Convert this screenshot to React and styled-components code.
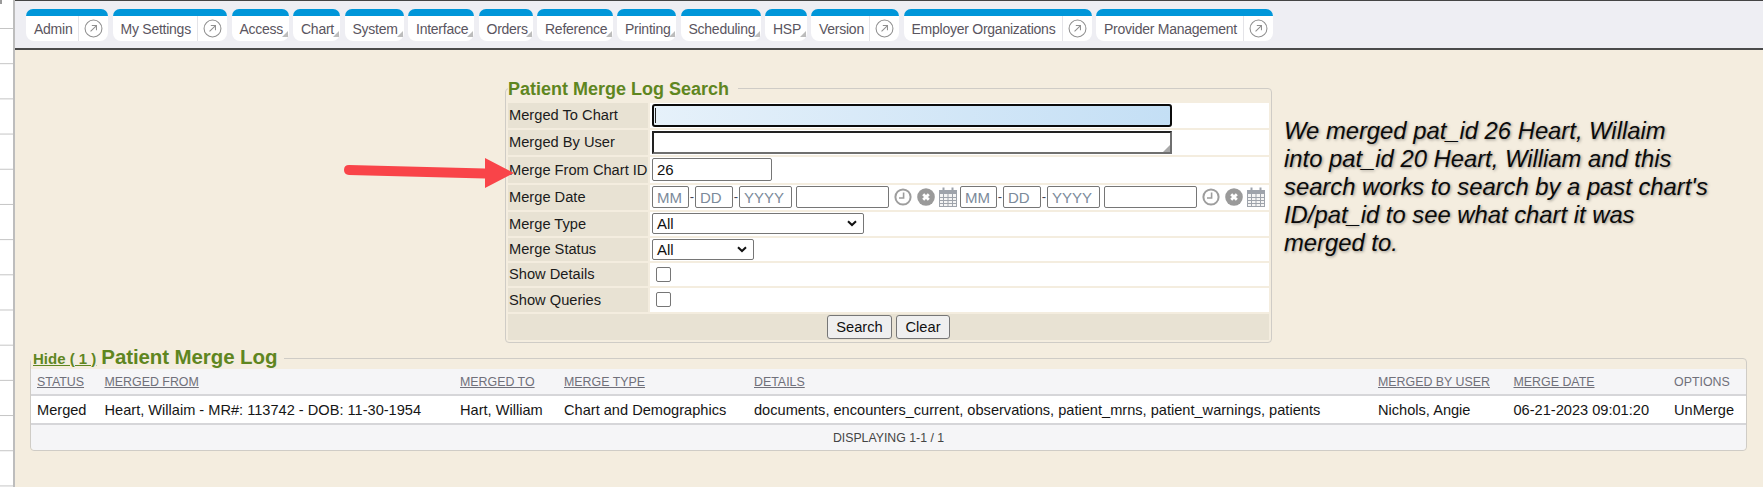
import React from 'react';
import styled, { createGlobalStyle } from 'styled-components';

const GlobalStyle = createGlobalStyle`
  html, body { margin: 0; padding: 0; height: 100%; overflow: hidden; }
  body { background: #f4eddf; font-family: "Liberation Sans", Arial, sans-serif; color: #111; }
  #root { height: 100%; }
`;

const Page = styled.div`
  display: flex;
  height: 487px;
  position: relative;
`;

const SideStrip = styled.div`
  position: relative;
  width: 13px;
  flex: none;
  background-color: #fff;
  background-image: linear-gradient(#c4c4c4 1px, transparent 1px);
  background-size: 100% 35.2px;
  background-position: 0 28px;
  border-right: 2px solid #bdbdbd;
  &::before {
    content: '';
    position: absolute;
    top: 0;
    left: 0;
    width: 2px;
    height: 4px;
    background: #9a9a9a;
  }
`;

const Main = styled.div`
  flex: 1;
  min-width: 0;
  display: flex;
  flex-direction: column;
`;

const Toolbar = styled.div`
  height: 39px;
  padding-top: 8px;
  padding-left: 11px;
  display: flex;
  gap: 4.5px;
  background: #eeeef3;
  border-top: 1px solid #444;
  border-bottom: 2px solid #4a4a4a;
`;

const Tab = styled.div`
  position: relative;
  width: ${(p) => p.$w}px;
  height: 32px;
  box-sizing: border-box;
  display: flex;
  align-items: center;
  flex: none;
  background: #fff;
  border-top: 7px solid #0096d9;
  border-radius: 7px 7px 8px 8px;
  font-size: 14px;
  color: #5a5560;
  white-space: nowrap;
  letter-spacing: -0.25px;
`;

const TabLabel = styled.span`
  flex: 1;
  padding-left: 8px;
`;

const TabLink = styled.span`
  width: 29px;
  height: 100%;
  flex: none;
  display: flex;
  align-items: center;
  justify-content: center;
  border-left: 1px solid #e4e4e8;
`;

const MenuCorner = styled.i`
  position: absolute;
  right: 1px;
  bottom: 4px;
  width: 0;
  height: 0;
  border-style: solid;
  border-width: 0 0 6px 6px;
  border-color: transparent transparent #bcbcbc transparent;
`;

const Content = styled.div`
  padding: 29.5px 0 0 15px;
`;

const SearchRow = styled.div`
  display: flex;
  align-items: flex-start;
  padding-left: 475px;
`;

const Panel = styled.fieldset`
  margin: 0;
  padding: 0 2px 2px;
  box-sizing: border-box;
  min-width: 0;
  border: 1px solid #cfccc6;
  border-radius: 4px;
  width: ${(p) => p.$w}px;
  flex: none;
`;

const PanelLegend = styled.legend`
  padding: 0 9px 0 0;
  margin-left: 0;
  font-size: 18px;
  font-weight: bold;
  line-height: 18px;
  color: #5f861f;
  white-space: nowrap;
`;

const FormGrid = styled.div`
  display: grid;
  grid-template-columns: 140px 1fr;
  column-gap: 2px;
  margin-top: 5px;
`;

const Label = styled.div`
  height: ${(p) => p.$h}px;
  margin-bottom: 2px;
  padding-left: 1px;
  display: flex;
  align-items: center;
  background: #e8e2d3;
  font-size: 14.67px;
  color: #1b1b1b;
  white-space: nowrap;
`;

const Field = styled.div`
  height: ${(p) => p.$h}px;
  margin-bottom: 2px;
  padding-left: 2px;
  display: flex;
  align-items: center;
  background: #fff;
`;

const ActionBar = styled.div`
  grid-column: 1 / -1;
  height: 26px;
  display: flex;
  justify-content: center;
  align-items: center;
  gap: 4px;
  background: #e8e2d3;
`;

const FocusInput = styled.div`
  width: 520px;
  height: 23px;
  box-sizing: border-box;
  border: 2px solid #0b0b0b;
  border-radius: 3px;
  padding: 2px 1px;
  background: linear-gradient(90deg, #e6f1fa, #c4dff5);
`;

const Caret = styled.div`
  width: 1px;
  height: 15px;
  background: #222;
`;

const Area = styled.div`
  position: relative;
  width: 520px;
  height: 23px;
  box-sizing: border-box;
  background: #fff;
  border: 2px solid;
  border-color: #222 #6f6f6f #6f6f6f #222;
`;

const Grip = styled.i`
  position: absolute;
  right: 0;
  bottom: 0;
  width: 0;
  height: 0;
  border-style: solid;
  border-width: 0 0 7px 7px;
  border-color: transparent transparent #a8a8a8 transparent;
`;

const TextBox = styled.div`
  width: ${(p) => p.$w}px;
  height: ${(p) => p.$h || 22}px;
  flex: none;
  box-sizing: border-box;
  margin-right: ${(p) => p.$mr || 0}px;
  padding-left: 4px;
  border: 1px solid #767676;
  border-radius: 2px;
  background: #fff;
  display: flex;
  align-items: center;
  font-size: 15px;
  color: ${(p) => (p.$hint ? '#7b8a9a' : '#111')};
`;

const Dash = styled.span`
  width: 6px;
  flex: none;
  text-align: center;
  font-size: 13px;
  line-height: 22px;
  color: #445;
`;

const IconBtn = styled.span`
  width: ${(p) => p.$w}px;
  flex: none;
  display: flex;
  justify-content: center;
`;

const SelectBox = styled.div`
  width: ${(p) => p.$w}px;
  height: 21px;
  flex: none;
  box-sizing: border-box;
  padding: 0 6px 0 4px;
  display: flex;
  align-items: center;
  justify-content: space-between;
  border: 1px solid #767676;
  border-radius: 2px;
  font-size: 15px;
  color: #111;
`;

const Check = styled.span`
  width: 13px;
  height: 13px;
  margin-left: 4px;
  border: 1px solid #767676;
  border-radius: 2px;
  background: #fff;
`;

const Button = styled.div`
  height: 24px;
  width: ${(p) => p.$w}px;
  box-sizing: border-box;
  display: flex;
  align-items: center;
  justify-content: center;
  border: 1px solid #767676;
  border-radius: 3px;
  background: #efefef;
  font-size: 14.67px;
  color: #111;
`;

const Note = styled.p`
  width: 440px;
  flex: none;
  margin: 37px 0 0 12px;
  font-size: 23.8px;
  line-height: 28.2px;
  font-style: italic;
  color: #0a0a0a;
  text-shadow: 1px 1px 3px rgba(0, 0, 0, 0.4);
`;

const LogPanel = styled(Panel)`
  margin-top: 5.5px;
  padding: 0;
  overflow: visible;
`;

const LogLegend = styled.legend`
  padding: 0 7px 0 2px;
  margin-left: 0;
  display: flex;
  align-items: baseline;
  gap: 5px;
  line-height: 18px;
  white-space: nowrap;
`;

const HideLink = styled.span`
  font-size: 15px;
  font-weight: bold;
  color: #5f861f;
  text-decoration: underline;
`;

const LogTitle = styled.span`
  font-size: 20.5px;
  font-weight: bold;
  color: #5f861f;
  letter-spacing: -0.1px;
`;

const Table = styled.table`
  width: 100%;
  table-layout: fixed;
  border-collapse: collapse;
  margin-top: 1px;
`;

const HeadCell = styled.th`
  height: 25px;
  padding: 0 0 0 6px;
  text-align: left;
  font-size: 12.4px;
  font-weight: normal;
  color: #70707a;
  background: #f5f5f7;
  border-bottom: 2px solid #d6d6d9;
  text-decoration: ${(p) => (p.$plain ? 'none' : 'underline')};
  white-space: nowrap;
`;

const BodyCell = styled.td`
  height: 27px;
  padding: 0 0 0 6px;
  font-size: 14.6px;
  color: #151515;
  background: #fff;
  border-bottom: 2px solid #d6d6d9;
  white-space: nowrap;
`;

const Pager = styled.div`
  height: 25px;
  display: flex;
  align-items: center;
  justify-content: center;
  background: #f5f5f7;
  font-size: 12.3px;
  color: #444;
  border-radius: 0 0 4px 4px;
`;

const Arrow = styled.svg`
  position: absolute;
  left: 340px;
  top: 154px;
  pointer-events: none;
`;

const LinkIcon = () => (
  <svg width="19" height="19" viewBox="0 0 18 18" fill="none" stroke="#8f8f8f" strokeWidth="1">
    <circle cx="9" cy="9" r="8" />
    <path d="M6.2 11.8 L11.6 6.4 M7.4 6.2 H11.8 V10.6" />
  </svg>
);

const ClockIcon = () => (
  <svg width="18" height="18" viewBox="0 0 18 18" fill="none" stroke="#9d9d9d">
    <circle cx="9" cy="9" r="7.6" strokeWidth="2" />
    <path d="M9.6 4.5 V10 H5" strokeWidth="1.6" />
  </svg>
);

const ClearIcon = () => (
  <svg width="18" height="18" viewBox="0 0 18 18">
    <circle cx="9" cy="9" r="8.8" fill="#9a9a9a" />
    <path d="M6.2 6.2 L11.8 11.8 M11.8 6.2 L6.2 11.8" stroke="#fff" strokeWidth="2.8" />
  </svg>
);

const CalendarIcon = () => (
  <svg width="18" height="20" viewBox="0 0 18 20" fill="none" stroke="#9ea3ab" strokeWidth="1">
    <rect x="0.5" y="3.5" width="17" height="16" fill="#f4f4f4" />
    <rect x="0.5" y="3.5" width="17" height="3" fill="#9ea3ab" />
    <path d="M0.5 10.5 H17.5 M0.5 13.5 H17.5 M0.5 16.5 H17.5 M4.5 6.5 V19.5 M9 6.5 V19.5 M13.5 6.5 V19.5" />
    <path d="M4.5 0.5 V4 M13.5 0.5 V4" strokeWidth="2" />
  </svg>
);

const SmallChevron = () => (
  <svg width="10" height="7" viewBox="0 0 10 7" fill="none" stroke="#111" strokeWidth="2">
    <path d="M1 1.2 L5 5 L9 1.2" />
  </svg>
);

const tabs = [
  { name: 'Admin', w: 82, link: true },
  { name: 'My Settings', w: 114.5, link: true },
  { name: 'Access', w: 57 },
  { name: 'Chart', w: 47 },
  { name: 'System', w: 59 },
  { name: 'Interface', w: 66 },
  { name: 'Orders', w: 54 },
  { name: 'Reference', w: 75.5 },
  { name: 'Printing', w: 59 },
  { name: 'Scheduling', w: 80 },
  { name: 'HSP', w: 41.5 },
  { name: 'Version', w: 88, link: true },
  { name: 'Employer Organizations', w: 188, link: true },
  { name: 'Provider Management', w: 177, link: true },
];

const columns = [
  { title: 'STATUS', w: 67.5 },
  { title: 'MERGED FROM', w: 355.5 },
  { title: 'MERGED TO', w: 104 },
  { title: 'MERGE TYPE', w: 190 },
  { title: 'DETAILS', w: 624 },
  { title: 'MERGED BY USER', w: 135.5 },
  { title: 'MERGE DATE', w: 160.5 },
  { title: 'OPTIONS', plain: true },
];

const row = [
  'Merged',
  'Heart, Willaim - MR#: 113742 - DOB: 11-30-1954',
  'Hart, William',
  'Chart and Demographics',
  'documents, encounters_current, observations, patient_mrns, patient_warnings, patients',
  'Nichols, Angie',
  '06-21-2023 09:01:20',
  'UnMerge',
];

const DateRange = () => (
  <>
    <TextBox $w={37} $hint>MM</TextBox>
    <Dash>-</Dash>
    <TextBox $w={38} $hint>DD</TextBox>
    <Dash>-</Dash>
    <TextBox $w={53} $hint $mr={4}>YYYY</TextBox>
    <TextBox $w={93} />
    <IconBtn $w={28}><ClockIcon /></IconBtn>
    <IconBtn $w={18}><ClearIcon /></IconBtn>
    <IconBtn $w={25}><CalendarIcon /></IconBtn>
  </>
);

const App = () => (
  <Page>
    <GlobalStyle />
    <SideStrip />
    <Main>
      <Toolbar>
        {tabs.map((t) => (
          <Tab key={t.name} $w={t.w}>
            <TabLabel>{t.name}</TabLabel>
            {t.link ? <TabLink><LinkIcon /></TabLink> : <MenuCorner />}
          </Tab>
        ))}
      </Toolbar>
      <Content>
        <SearchRow>
          <Panel $w={767}>
            <PanelLegend>Patient Merge Log Search</PanelLegend>
            <FormGrid>
              <Label $h={25}>Merged To Chart</Label>
              <Field $h={25}><FocusInput><Caret /></FocusInput></Field>
              <Label $h={25}>Merged By User</Label>
              <Field $h={25}><Area><Grip /></Area></Field>
              <Label $h={26}>Merge From Chart ID</Label>
              <Field $h={26}><TextBox $w={120} $h={23}>26</TextBox></Field>
              <Label $h={25}>Merge Date</Label>
              <Field $h={25}><DateRange /><DateRange /></Field>
              <Label $h={24}>Merge Type</Label>
              <Field $h={24}><SelectBox $w={212}>All<SmallChevron /></SelectBox></Field>
              <Label $h={23}>Merge Status</Label>
              <Field $h={23}><SelectBox $w={102}>All<SmallChevron /></SelectBox></Field>
              <Label $h={23}>Show Details</Label>
              <Field $h={23}><Check /></Field>
              <Label $h={24}>Show Queries</Label>
              <Field $h={24}><Check /></Field>
              <ActionBar>
                <Button $w={65}>Search</Button>
                <Button $w={54}>Clear</Button>
              </ActionBar>
            </FormGrid>
          </Panel>
          <Note>
            We merged pat_id 26 Heart, Willaim<br />
            into pat_id 20 Heart, William and this<br />
            search works to search by a past chart's<br />
            ID/pat_id to see what chart it was<br />
            merged to.
          </Note>
        </SearchRow>
        <LogPanel $w={1717}>
          <LogLegend>
            <HideLink>Hide ( 1 )</HideLink>
            <LogTitle>Patient Merge Log</LogTitle>
          </LogLegend>
          <Table>
            <colgroup>
              {columns.map((c) => <col key={c.title} style={c.w ? { width: c.w } : undefined} />)}
            </colgroup>
            <thead>
              <tr>
                {columns.map((c) => <HeadCell key={c.title} $plain={c.plain}>{c.title}</HeadCell>)}
              </tr>
            </thead>
            <tbody>
              <tr>
                {row.map((v) => <BodyCell key={v}>{v}</BodyCell>)}
              </tr>
            </tbody>
          </Table>
          <Pager>DISPLAYING 1-1 / 1</Pager>
        </LogPanel>
      </Content>
    </Main>
    <Arrow width="180" height="40" viewBox="0 0 180 40">
      <path
        d="M9 11 L145 14.5 L145 4 L174 19 L145 34 L145 24.5 L9 21 Q4 20.5 4 16 Q4 11 9 11 Z"
        fill="#f94449"
      />
    </Arrow>
  </Page>
);

export default App;
